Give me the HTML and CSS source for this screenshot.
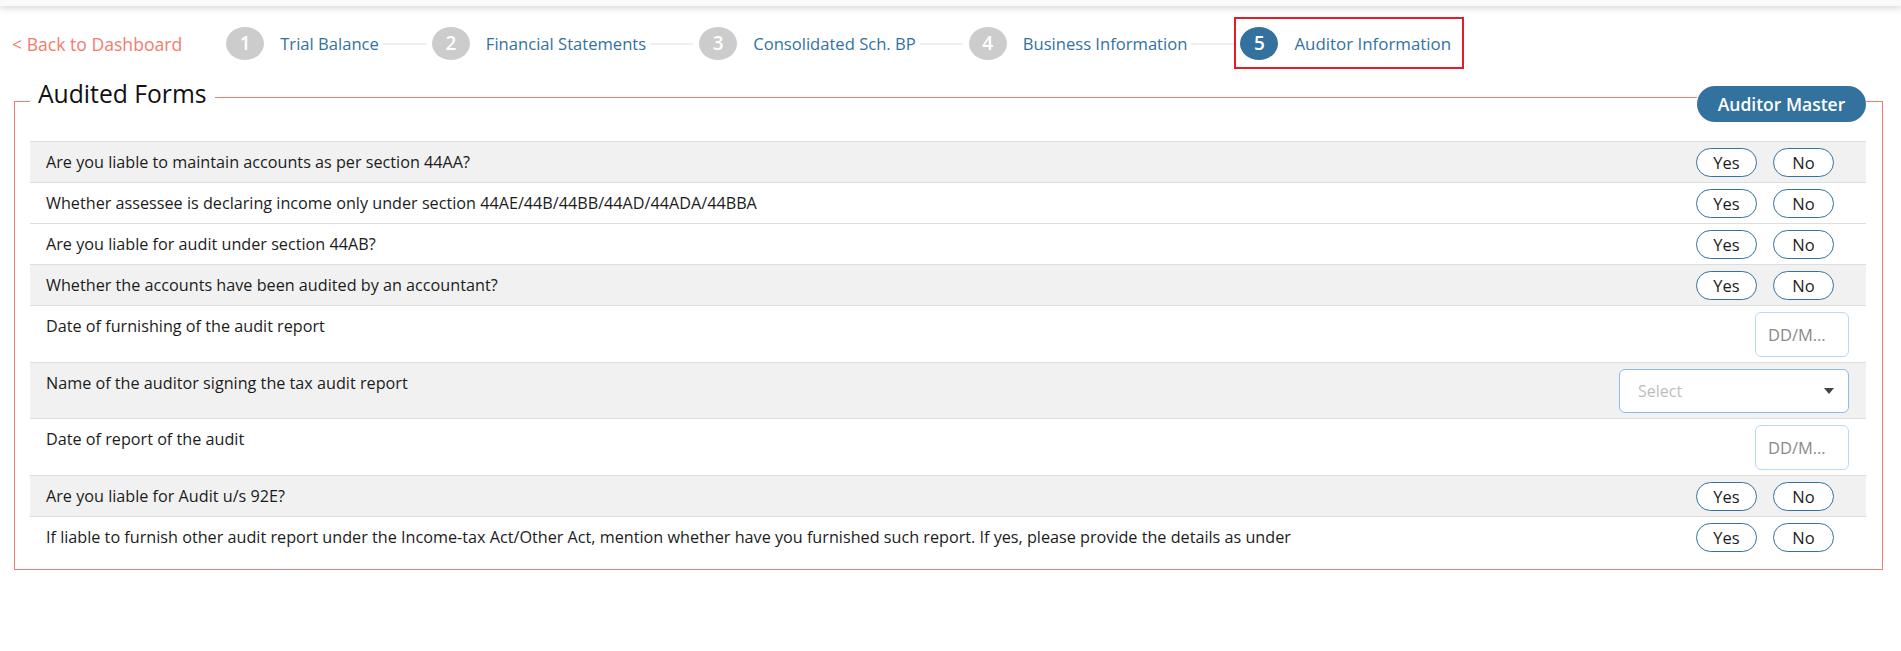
FILE: index.html
```html
<!DOCTYPE html>
<html lang="en">
<head>
    <meta charset="UTF-8">
    <meta name="viewport" content="width=device-width, initial-scale=1.0">
    <title>Auditor Information</title>
    <link rel="stylesheet" href="styles.css">
</head>
<body>
    <div class="topbar"></div>

    <!-- steps -->
    <nav class="steps">
        <a class="back" href="#">&lt; Back to Dashboard</a>
        <div class="step"><span class="num">1</span><span class="label">Trial Balance</span></div>
        <span class="line"></span>
        <div class="step"><span class="num">2</span><span class="label">Financial Statements</span></div>
        <span class="line"></span>
        <div class="step"><span class="num">3</span><span class="label">Consolidated Sch. BP</span></div>
        <span class="line"></span>
        <div class="step"><span class="num">4</span><span class="label">Business Information</span></div>
        <span class="line"></span>
        <div class="step active"><span class="num">5</span><span class="label">Auditor Information</span></div>
    </nav>

    <!-- form -->
    <fieldset class="box">
        <legend>
            <span class="title">Audited Forms</span>
            <span class="rule"></span>
            <button class="master">Auditor Master</button>
        </legend>

        <div class="row grey">
            <div class="q">Are you liable to maintain accounts as per section 44AA?</div>
            <div class="yn"><button>Yes</button><button>No</button></div>
        </div>
        <div class="row">
            <div class="q">Whether assessee is declaring income only under section 44AE/44B/44BB/44AD/44ADA/44BBA</div>
            <div class="yn"><button>Yes</button><button>No</button></div>
        </div>
        <div class="row">
            <div class="q">Are you liable for audit under section 44AB?</div>
            <div class="yn"><button>Yes</button><button>No</button></div>
        </div>
        <div class="row grey">
            <div class="q">Whether the accounts have been audited by an accountant?</div>
            <div class="yn"><button>Yes</button><button>No</button></div>
        </div>
        <div class="row">
            <div class="q">Date of furnishing of the audit report</div>
            <input class="date" type="text" placeholder="DD/MM/YYYY">
        </div>
        <div class="row grey">
            <div class="q">Name of the auditor signing the tax audit report</div>
            <div class="select"><span>Select</span><i class="caret"></i></div>
        </div>
        <div class="row">
            <div class="q">Date of report of the audit</div>
            <input class="date" type="text" placeholder="DD/MM/YYYY">
        </div>
        <div class="row grey">
            <div class="q">Are you liable for Audit u/s 92E?</div>
            <div class="yn"><button>Yes</button><button>No</button></div>
        </div>
        <div class="row">
            <div class="q">If liable to furnish other audit report under the Income-tax Act/Other Act, mention whether have you furnished such report. If yes, please provide the details as under</div>
            <div class="yn"><button>Yes</button><button>No</button></div>
        </div>
    </fieldset>
</body>
</html>
```

FILE: styles.css
```css
:root {
    --blue: #33729e;
    --salmon: #f47b6d;
    --grey: #f1f1f1;
    --bc: #dddddd;
}
* { box-sizing: border-box; }
body {
    margin: 0;
    font-family: "Open Sans", "Noto Sans", sans-serif;
    color: #1c1c1c;
    background: #fff;
}
.topbar { height: 6px; background: #fafafa; box-shadow: 0 2px 6px rgba(0, 0, 0, 0.18); }

/* steps */
.steps { display: flex; align-items: center; height: 52px; margin-top: 11px; padding-left: 12px; }
.back { color: var(--salmon); text-decoration: none; font-size: 17.6px; margin-right: 44px; padding-top: 2px; }
.step { display: flex; align-items: center; height: 52px; }
.num {
    width: 38px;
    height: 33px;
    border-radius: 50%;
    background: #cccccc;
    color: #fff;
    font-size: 19px;
    font-weight: 600;
    display: flex;
    align-items: center;
    justify-content: center;
    margin-right: 16px;
}
.label { color: var(--blue); font-size: 16.6px; padding-top: 1px; }
.line { width: 43px; height: 2px; background: #efefef; margin: 2px 6px 0 4px; }
.line:has(+ .active) { margin-right: 0; }
.step.active { border: 2px solid #e41c24; padding: 0 11px 0 4px; }
.step.active .label { font-size: 16.9px; }
.step.active .num { background: var(--blue); }

/* form box */
.box {
    margin: 12px 18px 0 14px;
    padding: 19px 16px 12px 15px;
    border: 1px solid var(--salmon);
    min-width: 0;
}
.box legend {
    display: flex;
    align-items: flex-start;
    width: 100%;
    padding: 0 0 0 8px;
}
.title { font-size: 24.7px; line-height: 26px; color: #111; }
.rule { flex: 1; height: 1px; background: var(--salmon); margin: 16px 0 0 8px; }
.master {
    margin-top: 5px;
    height: 36px;
    width: 169px;
    border: 0;
    border-radius: 18px;
    background: var(--blue);
    color: #fff;
    font: 600 17.5px "Open Sans", sans-serif;
}

.row {
    display: flex;
    align-items: flex-start;
    justify-content: space-between;
    border-top: 1px solid var(--bc);
    padding: 6px 17px 5px 16px;
}
.row.grey { background: var(--grey); }
.q { font-size: 16.2px; line-height: 29px; }
.yn { display: flex; gap: 16px; margin-right: 15px; }
.yn button {
    height: 29px;
    width: 61px;
    border: 1px solid var(--blue);
    border-radius: 15px;
    background: #fff;
    color: #1c1c1c;
    font: 16.5px "Open Sans", sans-serif;
    padding: 0;
}
.date {
    width: 94px;
    height: 45px;
    border: 1px solid #b9d9f7;
    border-radius: 6px;
    padding: 0 12px;
    font: 16.5px "Open Sans", sans-serif;
    text-overflow: ellipsis;
}
.date::placeholder { color: #8a8a8a; }
.select {
    width: 230px;
    height: 44px;
    border: 1px solid #8dbbea;
    border-radius: 6px;
    background: #fff;
    display: flex;
    align-items: center;
    justify-content: space-between;
    padding: 0 14px 0 18px;
    color: #bdbdbd;
    font-size: 16px;
}
.caret { border: 5px solid transparent; border-top: 6px solid #444; border-bottom: 0; }
```
